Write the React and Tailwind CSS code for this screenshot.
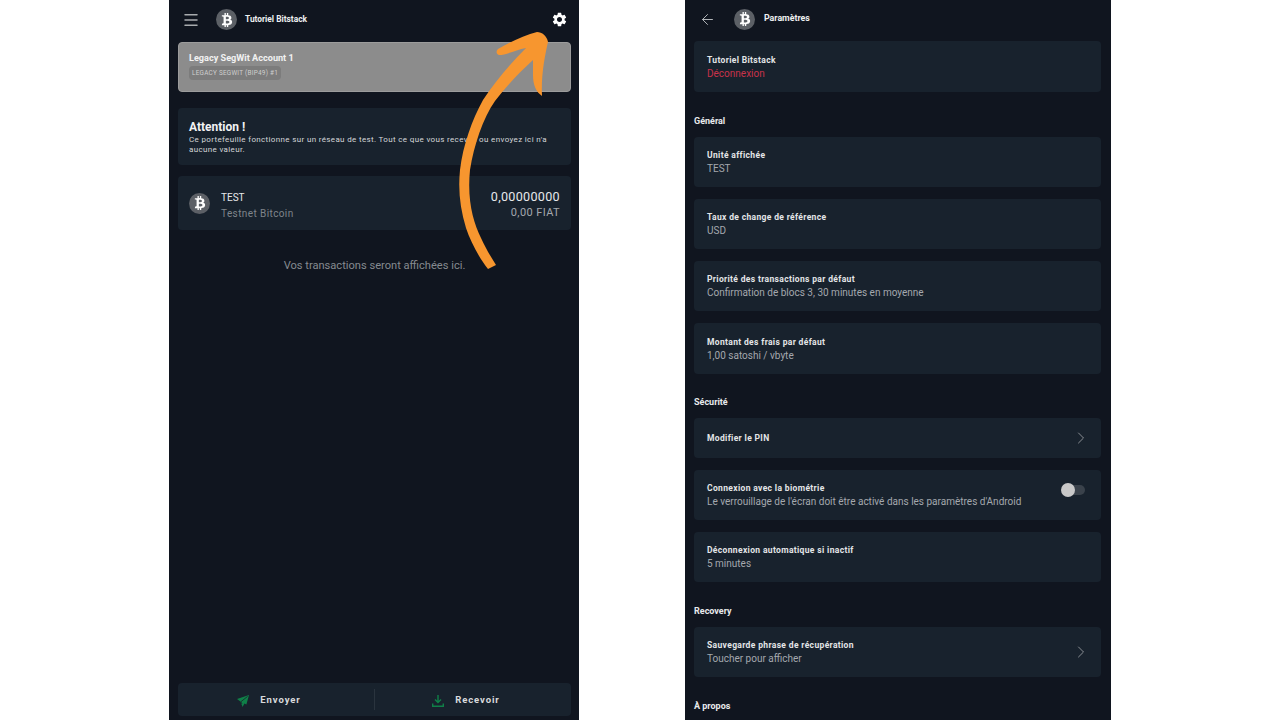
import React from 'react';
import { ArrowLeft, ChevronRight, Menu } from 'lucide-react';
import { FaBtc } from 'react-icons/fa';
import { MdSettings } from 'react-icons/md';

function CoinIcon({ size = 'w-[21px] h-[21px]', glyph = 14 }) {
  return (
    <div className={`${size} rounded-full bg-[#5c6066] flex items-center justify-center shrink-0`}>
      <FaBtc size={glyph} className="text-white" />
    </div>
  );
}

function PlaneIcon() {
  return (
    <svg width="12" height="12" viewBox="0 0 12 12" className="shrink-0">
      <path fill="#0f8048" d="M12 0 L0 4 L3.4 6.6 L5.6 12 L7.4 8.6 L9.4 9.6 Z" />
      <path stroke="#18222d" strokeWidth="0.8" fill="none" d="M10.6 1.4 L3.8 6.8 L5 9" />
    </svg>
  );
}

function TrayIcon() {
  return (
    <svg width="12" height="12" viewBox="0 0 12 12" className="shrink-0">
      <path stroke="#0f8048" strokeWidth="1.4" fill="none" d="M6 0 V7 M3 4.4 L6 7.4 L9 4.4 M0.7 8.5 V11.2 H11.3 V8.5" />
    </svg>
  );
}

function SectionLabel({ children, height = 'h-[45px]' }) {
  return (
    <div className={`${height} pt-[14px] flex items-center text-[9px] font-bold text-[#e8eaec] shrink-0`}>
      {children}
    </div>
  );
}

function SettingCard({ title, sub, subClass = 'text-[#a4a8ad]', height = 'h-[50px]', right, className = '' }) {
  return (
    <div className={`${height} ${className} rounded bg-[#18222d] pl-[13px] pr-[15px] flex items-center justify-between`}>
      <div className="flex flex-col">
        <span className="text-[8.5px] leading-[13px] font-bold tracking-[0.35px] text-[#e4e6e8]">{title}</span>
        {sub && <span className={`text-[10px] leading-[13px] ${subClass}`}>{sub}</span>}
      </div>
      {right}
    </div>
  );
}

function Arrow() {
  return (
    <svg className="absolute left-0 top-0 pointer-events-none" width="1280" height="720" viewBox="0 0 1280 720">
      <path
        fill="#f7962f"
        d="M498 49 C510 42 525 35 537 32 C542 32 547 36 548 42 C545 55 541 75 542 96 C536 92 533 85 533 75 L533 60
           C520 72 507 85 495 101 C483 118 474 145 470 170 C467 200 473 222 481 238 C486 249 491 257 496 265 L488 269
           C480 259 471 243 466 228 C460 208 458 190 460 170 C463 145 472 120 483 100 C495 82 510 64 526 48
           C516 50 506 55 499 55 C496 54 496 51 498 49 Z"
      />
    </svg>
  );
}

function WalletScreen() {
  return (
    <div className="w-[410px] h-full bg-[#10151f] pl-[9px] pr-[8px] flex flex-col shrink-0">
      <div className="h-[42px] flex items-center shrink-0">
        <Menu size={18} strokeWidth={2} className="text-[#a8abae] ml-[4px] mt-[-3px]" />
        <div className="ml-[16px] mt-[-3px]"><CoinIcon /></div>
        <span className="ml-[8px] mt-[-3px] text-[8.4px] font-bold text-[#eef0f1]">Tutoriel Bitstack</span>
        <MdSettings size={17} className="text-white ml-auto mr-[3px] mt-[-3px]" />
      </div>

      <div className="h-[50px] rounded bg-[#8c8c8c] border border-[#9c9c9c] pl-[10px] pt-[9px] shrink-0">
        <div className="text-[9.15px] leading-[13px] font-bold text-[#f2f2f2]">Legacy SegWit Account 1</div>
        <div className="mt-[1px] w-fit rounded-sm bg-[#7c7c7c] px-[3px] text-[6.4px] leading-[14px] tracking-[0.25px] text-[#cfcfcf]">
          LEGACY SEGWIT (BIP49) #1
        </div>
      </div>

      <div className="mt-[16px] h-[57px] rounded bg-[#18222d] pl-[11px] pr-[10px] pt-[12px] shrink-0">
        <div className="text-[12px] leading-[14px] font-bold text-[#f2f3f4]">Attention !</div>
        <div className="mt-[1px] text-[8px] leading-[9.5px] tracking-[0.35px] text-[#d5d7d9]">
          Ce portefeuille fonctionne sur un réseau de test. Tout ce que vous recevez ou envoyez ici n'a aucune valeur.
        </div>
      </div>

      <div className="mt-[11px] h-[54px] rounded bg-[#18222d] pl-[11px] pr-[11px] flex items-center shrink-0">
        <CoinIcon />
        <div className="ml-[11px] mt-[5px] flex flex-col">
          <span className="text-[10px] leading-[16px] text-[#e6e8ea]">TEST</span>
          <span className="text-[10px] leading-[16px] tracking-[0.4px] text-[#7f858b]">Testnet Bitcoin</span>
        </div>
        <div className="ml-auto mt-[3px] flex flex-col items-end">
          <span className="text-[12.6px] leading-[16px] tracking-[0.3px] text-[#e6e8ea]">0,00000000</span>
          <span className="text-[11px] leading-[16px] tracking-[0.4px] text-[#a4a8ad]">0,00 FIAT</span>
        </div>
      </div>

      <div className="mt-[28px] text-center text-[11.1px] leading-[16px] text-[#858a90]">
        Vos transactions seront affichées ici.
      </div>

      <div className="mt-auto mb-[4px] h-[33px] rounded bg-[#18222d] flex items-center shrink-0">
        <div className="flex-1 flex items-center justify-center gap-[11px] pr-[14px] pt-[2px]">
          <PlaneIcon />
          <span className="text-[9.5px] font-bold tracking-[0.9px] text-[#d8dadc]">Envoyer</span>
        </div>
        <div className="w-px h-[21px] bg-[#2a343e]" />
        <div className="flex-1 flex items-center justify-center gap-[11px] pr-[14px] pt-[2px]">
          <TrayIcon />
          <span className="text-[9.5px] font-bold tracking-[0.9px] text-[#d8dadc]">Recevoir</span>
        </div>
      </div>
    </div>
  );
}

function SettingsScreen() {
  const chevron = <ChevronRight size={20} strokeWidth={1.2} className="text-[#8a8f94] mr-[-5px]" />;
  const toggle = (
    <div className="relative w-[22px] h-[10px] rounded-full bg-[#3a424b] mb-[10px] mr-[1px] shrink-0">
      <div className="absolute left-[-2px] top-[-2px] w-[14px] h-[14px] rounded-full bg-[#c9c9c9]" />
    </div>
  );

  return (
    <div className="w-[426px] h-full overflow-hidden bg-[#10151f] pl-[9px] pr-[10px] flex flex-col shrink-0">
      <div className="h-[41px] flex items-center shrink-0">
        <ArrowLeft size={17} strokeWidth={1.4} className="text-[#b4b7ba] ml-[5px] mt-[-3px]" />
        <div className="ml-[18px] mt-[-3px]"><CoinIcon /></div>
        <span className="ml-[9px] mt-[-3px] text-[8.8px] font-bold text-[#eef0f1]">Paramètres</span>
      </div>

      <SettingCard title="Tutoriel Bitstack" sub="Déconnexion" subClass="text-[#c8324a]" height="h-[51px]" className="shrink-0" />

      <SectionLabel height="h-[45px]">Général</SectionLabel>
      <div className="flex flex-col gap-[12px] shrink-0">
        <SettingCard title="Unité affichée" sub="TEST" />
        <SettingCard title="Taux de change de référence" sub="USD" />
        <SettingCard title="Priorité des transactions par défaut" sub="Confirmation de blocs 3, 30 minutes en moyenne" />
        <SettingCard title="Montant des frais par défaut" sub="1,00 satoshi / vbyte" height="h-[51px]" />
      </div>

      <SectionLabel height="h-[44px]">Sécurité</SectionLabel>
      <div className="flex flex-col gap-[12px] shrink-0">
        <SettingCard title="Modifier le PIN" height="h-[40px]" right={chevron} />
        <SettingCard title="Connexion avec la biométrie" sub="Le verrouillage de l'écran doit être activé dans les paramètres d'Android" right={toggle} />
        <SettingCard title="Déconnexion automatique si inactif" sub="5 minutes" />
      </div>

      <SectionLabel height="h-[45px]">Recovery</SectionLabel>
      <SettingCard title="Sauvegarde phrase de récupération" sub="Toucher pour afficher" right={chevron} className="shrink-0" />

      <SectionLabel>À propos</SectionLabel>
    </div>
  );
}

export default function App() {
  return (
    <div className="relative w-[1280px] h-[720px] overflow-hidden bg-white pl-[169px] flex gap-[106px] font-['Roboto',sans-serif]">
      <WalletScreen />
      <SettingsScreen />
      <Arrow />
    </div>
  );
}
